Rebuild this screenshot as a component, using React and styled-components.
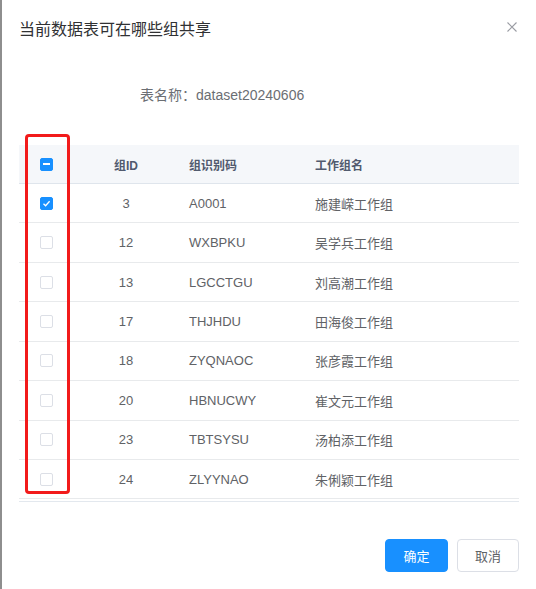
import React from "react";
import styled, { createGlobalStyle } from "styled-components";

const GlobalStyle = createGlobalStyle`
  html, body {
    margin: 0;
    padding: 0;
    background: #ffffff;
  }
  body {
    font-family: "Liberation Sans", "Noto Sans CJK SC", Arial, sans-serif;
  }
`;

const Dialog = styled.div`
  position: relative;
  width: 536px;
  height: 589px;
  box-sizing: border-box;
  border-left: 2px solid #8e8e8e;
  padding: 20px 17px 0 17px;
  background: #fff;
  display: flex;
  flex-direction: column;
`;

const Header = styled.div`
  display: flex;
  align-items: center;
  justify-content: space-between;
  height: 20px;
`;

const Title = styled.div`
  font-size: 16px;
  line-height: 20px;
  color: #303133;
`;

const Close = styled.button`
  width: 12px;
  height: 12px;
  padding: 0;
  margin: -6px 1px 0 0;
  border: none;
  background: none;
  cursor: pointer;
  display: flex;
  align-items: center;
  justify-content: center;
`;

const TableName = styled.div`
  margin-top: 45px;
  padding-left: 121px;
  font-size: 14px;
  line-height: 20px;
  color: #6b6e73;
`;

const TableWrap = styled.div`
  position: relative;
  margin-top: 40px;
  padding-bottom: 2px;
  border-bottom: 1px solid #e3e8ee;
`;

const Row = styled.div`
  display: grid;
  grid-template-columns: 52px 110px 126px 1fr;
  align-items: center;
  box-sizing: border-box;
  height: ${(p) => (p.$head ? "39px" : "39.43px")};
  border-bottom: 1px solid ${(p) => (p.$head ? "#dfe5ec" : "#e8eaec")};
  background: ${(p) => (p.$head ? "#f5f7fa" : "#fff")};
  font-size: ${(p) => (p.$head ? "12px" : "13px")};
  font-weight: ${(p) => (p.$head ? 700 : 400)};
  color: ${(p) => (p.$head ? "#515a6e" : "#606266")};
`;

const Cell = styled.div`
  padding-left: ${(p) => (p.$center ? "0" : "8px")};
  white-space: nowrap;
  display: flex;
  justify-content: ${(p) => (p.$center ? "center" : "flex-start")};
`;

const Box = styled.span`
  display: inline-flex;
  align-items: center;
  justify-content: center;
  box-sizing: border-box;
  width: 13px;
  height: 13px;
  border-radius: 2px;
  border: 1px solid ${(p) => (p.$on ? "#1890ff" : "#dcdfe6")};
  background: ${(p) => (p.$on ? "#1890ff" : "#fff")};
  margin-left: 2px;
`;

const Dash = styled.span`
  width: 7px;
  height: 2px;
  background: #fff;
`;

const Annotation = styled.div`
  position: absolute;
  left: 6px;
  top: -11px;
  width: 45px;
  height: 360px;
  box-sizing: border-box;
  border: 3px solid #f21b1b;
  border-radius: 4px;
  pointer-events: none;
`;

const Footer = styled.div`
  display: flex;
  justify-content: flex-end;
  gap: 9px;
  margin-top: 37px;
`;

const Button = styled.button`
  width: ${(p) => (p.$primary ? "63px" : "62px")};
  height: 33px;
  border-radius: 4px;
  font-family: inherit;
  font-size: 13px;
  cursor: pointer;
  border: 1px solid ${(p) => (p.$primary ? "#1890ff" : "#dcdfe6")};
  background: ${(p) => (p.$primary ? "#1890ff" : "#fff")};
  color: ${(p) => (p.$primary ? "#fff" : "#606266")};
`;

const rows = [
  { id: 3, code: "A0001", name: "施建嵘工作组", checked: true },
  { id: 12, code: "WXBPKU", name: "吴学兵工作组" },
  { id: 13, code: "LGCCTGU", name: "刘高潮工作组" },
  { id: 17, code: "THJHDU", name: "田海俊工作组" },
  { id: 18, code: "ZYQNAOC", name: "张彦霞工作组" },
  { id: 20, code: "HBNUCWY", name: "崔文元工作组" },
  { id: 23, code: "TBTSYSU", name: "汤柏添工作组" },
  { id: 24, code: "ZLYYNAO", name: "朱俐颖工作组" },
];

const Check = ({ checked }) => (
  <Box $on={checked}>
    {checked && (
      <svg width="9" height="9" viewBox="0 0 9 9">
        <path d="M1.5 4.8 L3.6 6.8 L7.6 2.3" fill="none" stroke="#fff" strokeWidth="1.3" />
      </svg>
    )}
  </Box>
);

export default function App() {
  return (
    <>
      <GlobalStyle />
      <Dialog>
        <Header>
          <Title>当前数据表可在哪些组共享</Title>
          <Close aria-label="close">
            <svg width="10" height="10" viewBox="0 0 10 10">
              <path d="M0.5 0.5 L9.5 9.5 M9.5 0.5 L0.5 9.5" stroke="#9a9ca3" strokeWidth="1.1" />
            </svg>
          </Close>
        </Header>
        <TableName>表名称：dataset20240606</TableName>
        <TableWrap>
          <Row $head>
            <Cell $center>
              <Box $on>
                <Dash />
              </Box>
            </Cell>
            <Cell $center>组ID</Cell>
            <Cell>组识别码</Cell>
            <Cell>工作组名</Cell>
          </Row>
          {rows.map((r) => (
            <Row key={r.id}>
              <Cell $center>
                <Check checked={r.checked} />
              </Cell>
              <Cell $center>{r.id}</Cell>
              <Cell>{r.code}</Cell>
              <Cell>{r.name}</Cell>
            </Row>
          ))}
          <Annotation />
        </TableWrap>
        <Footer>
          <Button $primary>确定</Button>
          <Button>取消</Button>
        </Footer>
      </Dialog>
    </>
  );
}
